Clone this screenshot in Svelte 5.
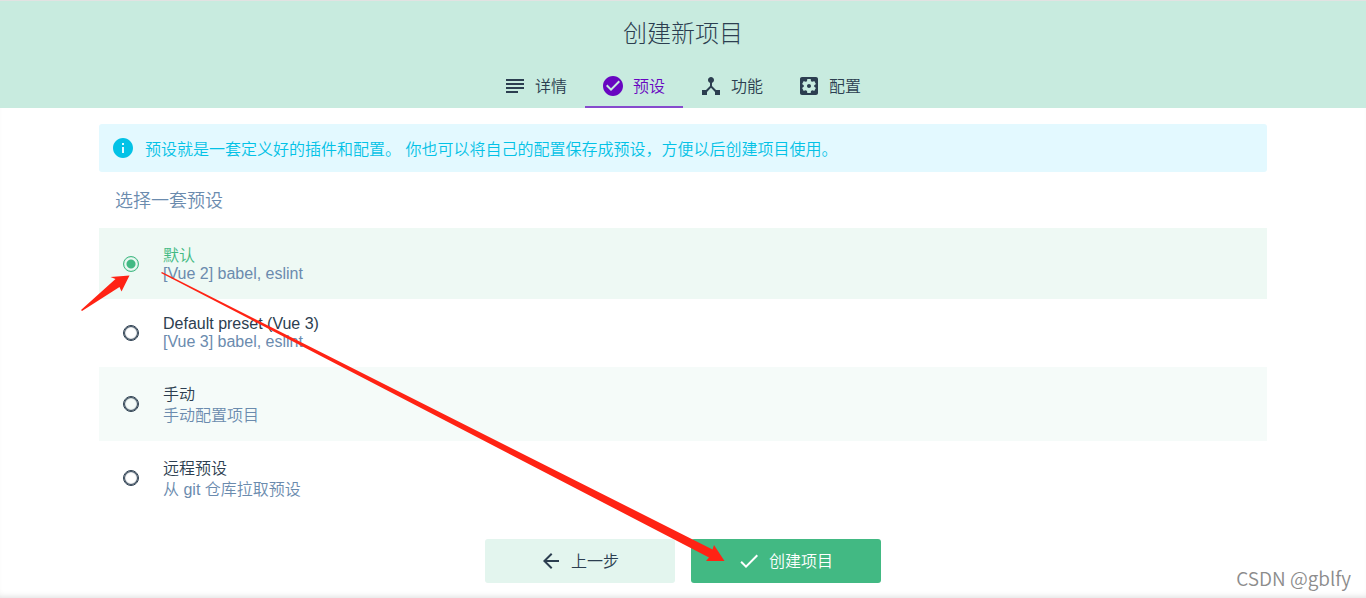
<script>
  const tabs = [
    { id: 'details', label: '详情', icon: 'M3 13h18v2H3zM3 17h12v2H3zM3 9h18v2H3zM3 5h18v2H3z' },
    { id: 'presets', label: '预设', icon: 'M12 2C6.48 2 2 6.48 2 12s4.48 10 10 10 10-4.48 10-10S17.52 2 12 2zm-2 15l-5-5 1.41-1.41L10 14.17l7.59-7.59L19 8l-9 9z' },
    { id: 'features', label: '功能', icon: 'M17 16l-4-4V8.82C14.16 8.4 15 7.3 15 6c0-1.66-1.34-3-3-3S9 4.34 9 6c0 1.3.84 2.4 2 2.82V12l-4 4H3v5h5v-3.05l4-4.2 4 4.2V21h5v-5h-4z' },
    { id: 'config', label: '配置', icon: 'M12 10c-1.1 0-2 .9-2 2s.9 2 2 2 2-.9 2-2-.9-2-2-2zm7-7H5c-1.11 0-2 .9-2 2v14c0 1.1.89 2 2 2h14c1.11 0 2-.9 2-2V5c0-1.1-.89-2-2-2zm-1.75 9c0 .23-.02.46-.05.68l1.48 1.16c.13.11.17.3.08.45l-1.4 2.42c-.09.15-.27.21-.43.15l-1.74-.7c-.36.28-.76.51-1.18.69l-.26 1.85c-.03.17-.18.3-.35.3h-2.8c-.17 0-.32-.13-.35-.29l-.26-1.85c-.43-.18-.82-.41-1.18-.69l-1.74.7c-.16.06-.34 0-.43-.15l-1.4-2.42c-.09-.15-.05-.34.08-.45l1.48-1.16c-.03-.23-.05-.46-.05-.69s.02-.46.05-.68l-1.48-1.16c-.13-.11-.17-.3-.08-.45l1.4-2.42c.09-.15.27-.21.43-.15l1.74.7c.36-.28.76-.51 1.18-.69l.26-1.85c.03-.17.18-.3.35-.3h2.8c.17 0 .32.13.35.29l.26 1.85c.43.18.82.41 1.18.69l1.74-.7c.16-.06.34 0 .43.15l1.4 2.42c.09.15.05.34-.08.45l-1.48 1.16c.03.23.05.46.05.69z' },
  ];
  const presets = [
    { id: 'default', name: '默认', info: '[Vue 2] babel, eslint' },
    { id: 'vue3', name: 'Default preset (Vue 3)', info: '[Vue 3] babel, eslint' },
    { id: 'manual', name: '手动', info: '手动配置项目' },
    { id: 'remote', name: '远程预设', info: '从 git 仓库拉取预设' },
  ];
  const isCjk = (text) => /[\u4e00-\u9fff]/.test(text);

  let activeTab = $state('presets');
  let selected = $state('default');
</script>

<div class="page">
  <header>
    <h1>创建新项目</h1>
    <nav>
      {#each tabs as tab (tab.id)}
        <button class="tab" class:active={activeTab === tab.id} onclick={() => (activeTab = tab.id)}>
          <svg viewBox="0 0 24 24" aria-hidden="true"><path d={tab.icon} /></svg>
          <span>{tab.label}</span>
        </button>
      {/each}
    </nav>
  </header>

  <main>
    <div class="notice">
      <svg viewBox="0 0 24 24" aria-hidden="true"><path d="M12 2C6.48 2 2 6.48 2 12s4.48 10 10 10 10-4.48 10-10S17.52 2 12 2zm1 15h-2v-6h2v6zm0-8h-2V7h2v2z" /></svg>
      <p>预设就是一套定义好的插件和配置。 你也可以将自己的配置保存成预设，方便以后创建项目使用。</p>
    </div>

    <h2 id="preset-title">选择一套预设</h2>

    <div class="presets" role="radiogroup" aria-labelledby="preset-title">
      {#each presets as preset (preset.id)}
        <label class="preset" class:selected={selected === preset.id}>
          <input type="radio" name="preset" value={preset.id} bind:group={selected} />
          <span class="text">
            <span class="name" class:cjk={isCjk(preset.name)}>{preset.name}</span>
            <span class="info" class:cjk={isCjk(preset.info)}>{preset.info}</span>
          </span>
        </label>
      {/each}
    </div>
  </main>

  <footer>
    <button class="action">
      <svg viewBox="0 0 24 24" aria-hidden="true"><path d="M20 11H7.83l5.59-5.59L12 4l-8 8 8 8 1.41-1.41L7.83 13H20v-2z" /></svg>
      <span>上一步</span>
    </button>
    <button class="action primary">
      <svg viewBox="0 0 24 24" aria-hidden="true"><path d="M9 16.17L4.83 12l-1.42 1.41L9 19 21 7l-1.41-1.41z" /></svg>
      <span>创建项目</span>
    </button>
  </footer>

  <svg class="arrows" viewBox="0 0 1366 598" aria-hidden="true">
    <path d="M81 310 115.5 279 110.5 277 129.5 275.5 121.5 291.5 119.5 287 82 311z" />
    <path d="M161 273 162 272 712.5 549.5 714 545 724.5 561 706 561 709 557.5z" />
  </svg>
  <span class="watermark">CSDN @gblfy</span>
</div>

<style>
  :global(body) {
    margin: 0;
    background: #fff;
  }
  .page {
    position: relative;
    box-sizing: border-box;
    min-height: 100vh;
    overflow: hidden;
    display: flex;
    flex-direction: column;
    color: #2c3e50;
    font: 16px/21px "Liberation Sans", "Noto Sans CJK SC", sans-serif;
    font-weight: 350;
    box-shadow: inset 0 -5px 6px -4px #ddd;
  }
  h1, h2, p {
    margin: 0;
    font-weight: 350;
  }
  button {
    font: inherit;
    color: inherit;
    border: 0;
    cursor: pointer;
  }
  svg {
    flex: none;
    width: 24px;
    height: 24px;
    fill: currentColor;
  }
  header {
    background: #c8ebdf;
    border-top: 1px solid #e2e2e2;
  }
  h1 {
    padding: 17px 0 14px;
    font-size: 24px;
    font-weight: 300;
    line-height: 32px;
    text-align: center;
  }
  nav {
    display: flex;
    justify-content: center;
  }
  .tab {
    display: flex;
    align-items: center;
    gap: 8px;
    height: 44px;
    padding: 2px 18px 0 16px;
    background: none;
    border-bottom: 2px solid transparent;
  }
  .tab.active {
    color: #6806c1;
    border-color: #864bcd;
  }
  main {
    box-sizing: border-box;
    width: 100%;
    max-width: 1200px;
    margin: 0 auto;
    padding: 16px 16px 0;
  }
  .notice {
    display: flex;
    align-items: center;
    gap: 10px;
    padding: 12px;
    border-radius: 3px;
    background: #e3f9ff;
    color: #03c2e6;
  }
  .notice p {
    padding-top: 2px;
  }
  h2 {
    padding: 17px 16px 15px;
    font-size: 18px;
    line-height: 24px;
    color: #6b8bae;
  }
  .preset {
    display: flex;
    align-items: center;
    gap: 24px;
    padding: 16px 24px;
    cursor: pointer;
  }
  .preset:nth-child(odd) {
    background: #f5fbf9;
  }
  .preset.selected {
    background: #eef9f4;
  }
  .preset input {
    appearance: none;
    box-sizing: border-box;
    flex: none;
    width: 16px;
    height: 16px;
    margin: 0;
    color: #2c3e50;
    border: 1px solid currentColor;
    border-radius: 50%;
    box-shadow: inset 0 0 1px 1px currentColor;
  }
  .preset input:checked {
    color: #42b983;
    background: radial-gradient(circle, #42b983 4px, transparent 5px);
    box-shadow: inset 0 0 1px currentColor;
  }
  .text {
    display: flex;
    flex-direction: column;
    line-height: 18px;
  }
  .cjk {
    padding-top: 2px;
    line-height: 19px;
  }
  .selected .name {
    color: #42b983;
  }
  .info {
    color: #6b8bae;
  }
  footer {
    display: flex;
    justify-content: center;
    gap: 16px;
    padding: 24px 16px 15px;
  }
  .action {
    display: flex;
    align-items: center;
    justify-content: center;
    gap: 8px;
    width: 190px;
    height: 44px;
    padding: 0 8px 0 6px;
    border-radius: 3px;
    background: #e3f5ee;
  }
  .primary {
    background: #42b983;
    color: #fff;
  }
  .arrows {
    position: absolute;
    top: 0;
    left: 50%;
    width: 1366px;
    height: 598px;
    margin-left: -683px;
    fill: #ff2314;
    pointer-events: none;
  }
  .watermark {
    position: absolute;
    right: 15px;
    bottom: 8px;
    color: #8c8c8c;
    font: 19px/24px "Noto Sans CJK SC", sans-serif;
    font-weight: 350;
  }
</style>
